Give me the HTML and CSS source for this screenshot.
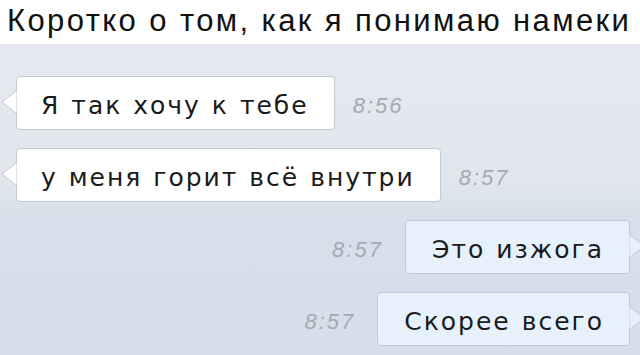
FILE: index.html
```html
<!DOCTYPE html>
<html lang="ru">
<head>
    <meta charset="UTF-8">
    <title>Намеки</title>
    <link rel="stylesheet" href="styles.css">
</head>
<body>
    <header class="title">Коротко о том, как я понимаю намеки</header>

    <div class="chat">
        <div class="row in">
            <div class="bubble">
                <svg class="tail" width="16" height="24" viewBox="0 0 16 24"><polygon points="16,1 15,1 1,12 15,23 16,23" /></svg>
                Я так хочу к тебе
            </div>
            <span class="time">8:56</span>
        </div>
        <div class="row in">
            <div class="bubble">
                <svg class="tail" width="16" height="24" viewBox="0 0 16 24"><polygon points="16,1 15,1 1,12 15,23 16,23" /></svg>
                у меня горит всё внутри
            </div>
            <span class="time">8:57</span>
        </div>
        <div class="row out">
            <span class="time">8:57</span>
            <div class="bubble">
                Это изжога
                <svg class="tail" width="16" height="24" viewBox="0 0 16 24"><polygon points="0,1 1,1 15,12 1,23 0,23" /></svg>
            </div>
        </div>
        <div class="row out">
            <span class="time">8:57</span>
            <div class="bubble">
                Скорее всего
                <svg class="tail" width="16" height="24" viewBox="0 0 16 24"><polygon points="0,1 1,1 15,12 1,23 0,23" /></svg>
            </div>
        </div>
    </div>
</body>
</html>
```

FILE: styles.css
```css
body {
    margin: 0;
    font-family: "Liberation Sans", Arial, sans-serif;
    background: #d8e0ea;
}
.title {
    height: 44px;
    background: #ffffff;
    color: #111111;
    font-size: 31px;
    letter-spacing: 2.4px;
    line-height: 42px;
    padding-left: 7px;
    white-space: nowrap;
}
.chat {
    height: 311px;
    box-sizing: border-box;
    padding: 32px 10px 0 16px;
    background: linear-gradient(#e5e9ef, #e1e6ed 45%, #d7e0ea 55%, #d6dfe9);
    display: flex;
    flex-direction: column;
    gap: 18px;
}
.row {
    display: flex;
    align-items: center;
}
.row.out {
    justify-content: flex-end;
}
.bubble {
    position: relative;
    height: 54px;
    box-sizing: border-box;
    padding: 4px 25px 0 24px;
    display: flex;
    align-items: center;
    font-family: "DejaVu Sans", sans-serif;
    font-size: 25px;
    letter-spacing: 2px;
    word-spacing: 1px;
    color: #1b1b1b;
    background: #ffffff;
    border: 1px solid #c3c9d1;
    border-radius: 4px;
}
.out .bubble {
    background: #e6f1fb;
    padding: 4px 25px 0 26px;
}
.tail {
    position: absolute;
    top: 13px;
}
.tail polygon {
    fill: #ffffff;
    stroke: #c3c9d1;
    stroke-width: 1;
}
.in .tail {
    left: -16px;
}
.out .tail {
    right: -16px;
}
.out .tail polygon {
    fill: #e6f1fb;
}
.time {
    font-size: 22px;
    font-style: italic;
    letter-spacing: 2px;
    color: #a3aab3;
    padding-top: 6px;
}
.in .time {
    margin-left: 18px;
}
.out .time {
    margin-right: 22px;
}
```
